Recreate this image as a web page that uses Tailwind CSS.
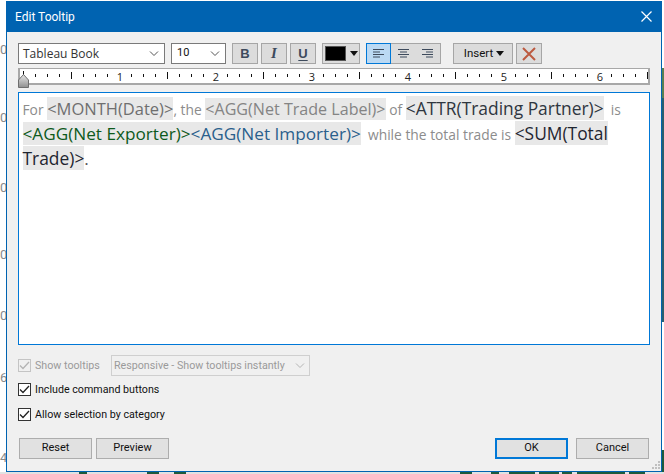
<!doctype html>
<html><head><meta charset="utf-8"><script src="https://cdn.jsdelivr.net/npm/@tailwindcss/browser@4"></script></head>
<body class="m-0 bg-white">
<div class="relative w-[664px] h-[474px] overflow-hidden bg-white font-['Roboto',sans-serif]">
  <!-- backdrop behind the dialog -->
  <div class="absolute left-[662px] top-[68px] w-[2px] h-[30px] bg-[#5a7f50]"></div>
  <div class="absolute left-[662px] top-[98px] w-[2px] h-[224px] bg-[#2a5f6f]"></div>
  <div class="absolute left-[662px] top-[450px] w-[2px] h-[24px] bg-[#1f5a3c]"></div>
  <div class="absolute left-0 top-[472px] w-[664px] h-[2px] bg-[#e2e2e2]"></div>
  <div class="absolute left-[79px] top-[472px] w-[8px] h-[2px] bg-[#1f5a3c]"></div>
  <div class="absolute left-[147px] top-[472px] w-[12px] h-[2px] bg-[#1f5a3c]"></div>
  <div class="absolute left-[174px] top-[472px] w-[12px] h-[2px] bg-[#1f5a3c]"></div>
  <div class="absolute left-[460px] top-[472px] w-[12px] h-[2px] bg-[#1f5a3c]"></div>
  <div class="absolute left-[491px] top-[472px] w-[8px] h-[2px] bg-[#1f5a3c]"></div>
  <div class="absolute left-[509px] top-[472px] w-[26px] h-[2px] bg-[#1f5a3c]"></div>
  <div class="absolute left-[539px] top-[472px] w-[20px] h-[2px] bg-[#1f5a3c]"></div>
  <div class="absolute left-[562px] top-[472px] w-[10px] h-[2px] bg-[#1f5a3c]"></div>
  <div class="absolute left-[577px] top-[472px] w-[48px] h-[2px] bg-[#1f5a3c]"></div>
  <div class="absolute left-[629px] top-[472px] w-[16px] h-[2px] bg-[#1f5a3c]"></div>
  <span class="absolute left-0 top-[42px] text-[13px] leading-[16px] text-[#8a8a8a]">0</span>
  <span class="absolute left-0 top-[110px] text-[13px] leading-[16px] text-[#8a8a8a]">0</span>
  <span class="absolute left-0 top-[180px] text-[13px] leading-[16px] text-[#8a8a8a]">0</span>
  <span class="absolute left-0 top-[247px] text-[13px] leading-[16px] text-[#8a8a8a]">0</span>
  <span class="absolute left-0 top-[308px] text-[13px] leading-[16px] text-[#8a8a8a]">0</span>
  <span class="absolute left-0 top-[370px] text-[13px] leading-[16px] text-[#8a8a8a]">6</span>
  <span class="absolute left-0 top-[450px] text-[13px] leading-[16px] text-[#8a8a8a]">4</span>

  <!-- dialog window -->
  <div class="absolute left-[6px] top-[1px] w-[656px] h-[471px] bg-[#f0f0f0] border border-[#0063b1] border-t-0 flex flex-col text-[11px] text-[#111]">
    <div class="h-[31px] shrink-0 bg-[#0063b1] flex items-center justify-between pl-[8px] pr-[9px] text-white text-[12px]">
      <span class="mt-[1px]">Edit Tooltip</span>
      <svg width="11" height="11" viewBox="0 0 11 11" fill="none" stroke="#fff" stroke-width="1.2"><path d="M.5.5l10 10M10.5.5l-10 10"/></svg>
    </div>
    <div class="flex-1 flex flex-col pl-[11px] pr-[11px] pt-[11px] relative">
      <!-- toolbar -->
      <div class="flex items-stretch h-[21px] shrink-0">
        <div class="w-[147px] bg-white border border-[#7a7a7a] flex items-center justify-between pl-[4px] pr-[5px] font-['Open_Sans',sans-serif] text-[12px] text-[#333]">
          <span>Tableau Book</span>
          <svg width="10" height="6" viewBox="0 0 10 6" fill="none" stroke="#555"><path d="M1 .5l4 4 4-4"/></svg>
        </div>
        <div class="ml-[6px] w-[55px] bg-white border border-[#7a7a7a] flex items-center justify-between pl-[5px] pr-[5px] text-[11px]">
          <span>10</span>
          <svg width="10" height="6" viewBox="0 0 10 6" fill="none" stroke="#555"><path d="M1 .5l4 4 4-4"/></svg>
        </div>
        <div class="ml-[6px] w-[26px] bg-[#dcdcdc] border border-[#a6a6a6] flex items-center justify-center font-['Liberation_Sans',sans-serif] font-bold text-[13px] text-[#3d4a5c]">B</div>
        <div class="ml-[3px] w-[26px] bg-[#dcdcdc] border border-[#a6a6a6] flex items-center justify-center font-['Liberation_Serif',serif] italic font-bold text-[15px] text-[#3d4a5c]">I</div>
        <div class="ml-[3px] w-[26px] bg-[#dcdcdc] border border-[#a6a6a6] flex items-center justify-center font-['Liberation_Sans',sans-serif] font-bold text-[13px] text-[#3d4a5c] underline underline-offset-2">U</div>
        <div class="ml-[6px] w-[38px] bg-[#dcdcdc] border border-[#a6a6a6] flex items-center pl-[2px] gap-[4px]">
          <div class="w-[21px] h-[15px] bg-black border border-[#555]"></div>
          <svg width="8" height="5" viewBox="0 0 8 5"><path d="M0 0h8L4 5z" fill="#111"/></svg>
        </div>
        <div class="ml-[6px] w-[75px] flex bg-[#dcdcdc] border border-[#a6a6a6]">
          <div class="w-[25px] -my-px -ml-px bg-[#bbd9f3] border border-[#0078d7] flex items-center justify-center">
            <svg width="11" height="9" viewBox="0 0 11 9" stroke="#3d4a5c"><path d="M0 .5h11M0 3H7M0 5.5h11M0 8H7"/></svg>
          </div>
          <div class="w-[25px] flex items-center justify-center">
            <svg width="11" height="9" viewBox="0 0 11 9" stroke="#3d4a5c"><path d="M0 .5h11M2 3h7M0 5.5h11M2 8h7"/></svg>
          </div>
          <div class="w-[25px] flex items-center justify-center">
            <svg width="11" height="9" viewBox="0 0 11 9" stroke="#3d4a5c"><path d="M0 .5h11M4 3h7M0 5.5h11M4 8h7"/></svg>
          </div>
        </div>
        <div class="ml-[12px] w-[60px] bg-[#dcdcdc] border border-[#a6a6a6] flex items-center justify-center gap-[3px] text-[11.5px] pl-[2px]">
          <span>Insert</span>
          <svg width="8" height="5" viewBox="0 0 8 5"><path d="M0 0h8L4 5z" fill="#111"/></svg>
        </div>
        <div class="ml-[3px] w-[26px] bg-[#dcdcdc] border border-[#a6a6a6] flex items-center justify-center">
          <svg width="14" height="14" viewBox="0 0 14 14" fill="none" stroke="#bc5a40" stroke-width="2"><path d="M1 1l12 12M13 1L1 13"/></svg>
        </div>
      </div>
      <!-- ruler -->
      <div class="relative mt-[4px] h-[17px] w-[632px] shrink-0 bg-white border-2 border-t border-[#a8a8a8]">
        <svg class="absolute left-[-2px] top-[-1px]" width="632" height="17" viewBox="0 0 632 17">
          <path stroke="#111" fill="none" d="M5.5 3v8M53.5 4v7M149.5 4v7M245.5 4v7M341.5 4v7M437.5 4v7M533.5 4v7M629.5 4v7M17.5 6v3M29.5 6v3M41.5 6v3M65.5 6v3M77.5 6v3M89.5 6v3M113.5 6v3M125.5 6v3M137.5 6v3M161.5 6v3M173.5 6v3M185.5 6v3M209.5 6v3M221.5 6v3M233.5 6v3M257.5 6v3M269.5 6v3M281.5 6v3M305.5 6v3M317.5 6v3M329.5 6v3M353.5 6v3M365.5 6v3M377.5 6v3M401.5 6v3M413.5 6v3M425.5 6v3M449.5 6v3M461.5 6v3M473.5 6v3M497.5 6v3M509.5 6v3M521.5 6v3M545.5 6v3M557.5 6v3M569.5 6v3M593.5 6v3M605.5 6v3M617.5 6v3"/>
          <g fill="#222" font-family="Open Sans, sans-serif" font-size="11" text-anchor="middle">
            <text x="102" y="13">1</text><text x="198" y="13">2</text><text x="294" y="13">3</text><text x="390" y="13">4</text><text x="486" y="13">5</text><text x="582" y="13">6</text>
          </g>
        </svg>
        <svg class="absolute left-[-2px] top-[5px]" width="11" height="14" viewBox="0 0 11 14">
          <defs><linearGradient id="g" x1="0" y1="0" x2="0" y2="1"><stop offset="0" stop-color="#e8e8e8"/><stop offset="1" stop-color="#8e8e8e"/></linearGradient></defs>
          <path d="M5.5 .5L10.5 6v7.5H.5V6z" fill="url(#g)" stroke="#6e6e6e"/>
        </svg>
      </div>
      <!-- editor -->
      <div class="mt-[7px] h-[253px] w-[632px] shrink-0 bg-white border-[1.5px] border-[#0078d7] px-[3.5px] pt-[3px] font-['Open_Sans',sans-serif] text-[17.2px] leading-[24px] whitespace-nowrap">
        <span class="text-[13.8px] leading-[16px] text-[#8c8c8c]">For </span><span class="text-[16.5px] leading-[20px] bg-[#e8e8e8] text-[#6f6f6f]">&lt;MONTH(Date)&gt;</span><span class="text-[13.8px] leading-[16px] text-[#8c8c8c]">, the </span><span class="text-[16.1px] leading-[20px] bg-[#e8e8e8] text-[#848484]">&lt;AGG(Net Trade Label)&gt;</span><span class="text-[13.8px] leading-[16px] text-[#8c8c8c]"> of </span><span class="text-[17.4px] bg-[#e8e8e8] text-[#2f3640]">&lt;ATTR(Trading Partner)&gt;</span><span class="text-[13.8px] leading-[16px] text-[#8c8c8c]"> &nbsp;is</span><br>
        <span class="bg-[#e8e8e8] text-[#0d5a1c]">&lt;AGG(Net Exporter)&gt;</span><span class="bg-[#e8e8e8] text-[#2a5f8c]">&lt;AGG(Net Importer)&gt;</span><span class="text-[13.8px] leading-[16px] text-[#8c8c8c]"> &nbsp;while the total trade is </span><span class="text-[17.4px] bg-[#e8e8e8] text-[#1f2530]">&lt;SUM(Total</span><br>
        <span class="text-[17.4px] bg-[#e8e8e8] text-[#1f2530]">Trade)&gt;</span><span class="text-[#555]">.</span>
      </div>
      <!-- options -->
      <div class="mt-[10px] h-[21px] flex items-center shrink-0 text-[10.7px] text-[#9a9a9a] whitespace-nowrap">
        <div class="w-[13px] h-[13px] bg-[#f0f0f0] border border-[#c4c4c4] flex items-center justify-center"><svg width="11" height="9" viewBox="0 0 11 9" fill="none" stroke="#b4b4b4" stroke-width="1.3"><path d="M1 4.5L4 7.5 10 1"/></svg></div>
        <span class="ml-[4px] w-[76px] pt-[2px]">Show tooltips</span>
        <div class="w-[199px] h-[21px] border border-[#cfcfcf] flex items-center justify-between pl-[2px] pr-[4px]">
          <span class="pt-[2px]">Responsive - Show tooltips instantly</span>
          <svg width="10" height="6" viewBox="0 0 10 6" fill="none" stroke="#b4b4b4"><path d="M1 .5l4 4 4-4"/></svg>
        </div>
      </div>
      <div class="mt-[4px] h-[19px] flex items-center shrink-0 text-[10.7px]">
        <div class="w-[13px] h-[13px] bg-white border border-[#333] flex items-center justify-center"><svg width="11" height="9" viewBox="0 0 11 9" fill="none" stroke="#222" stroke-width="1.3"><path d="M1 4.5L4 7.5 10 1"/></svg></div>
        <span class="ml-[4px] pt-[2px]">Include command buttons</span>
      </div>
      <div class="mt-[6px] h-[19px] flex items-center shrink-0 text-[10.7px]">
        <div class="w-[13px] h-[13px] bg-white border border-[#333] flex items-center justify-center"><svg width="11" height="9" viewBox="0 0 11 9" fill="none" stroke="#222" stroke-width="1.3"><path d="M1 4.5L4 7.5 10 1"/></svg></div>
        <span class="ml-[4px] pt-[2px]">Allow selection by category</span>
      </div>
      <!-- buttons -->
      <div class="mt-[14px] h-[21px] flex shrink-0 pl-[1px]">
        <div class="w-[73px] bg-[#e1e1e1] border border-[#adadad] flex items-center justify-center">Reset</div>
        <div class="ml-[4px] w-[73px] bg-[#e1e1e1] border border-[#adadad] flex items-center justify-center">Preview</div>
        <div class="ml-auto w-[73px] bg-[#e1e1e1] border-2 border-[#0078d7] flex items-center justify-center">OK</div>
        <div class="ml-[8px] mr-[1px] w-[73px] bg-[#e1e1e1] border border-[#adadad] flex items-center justify-center">Cancel</div>
      </div>
      <svg class="absolute right-0 bottom-[1px]" width="9" height="9" viewBox="0 0 9 9" fill="#c0c0c0"><path d="M6 0h2v2H6zM3 3h2v2H3zM6 3h2v2H6zM0 6h2v2H0zM3 6h2v2H3zM6 6h2v2H6z"/></svg>
    </div>
  </div>
</div>
</body></html>
